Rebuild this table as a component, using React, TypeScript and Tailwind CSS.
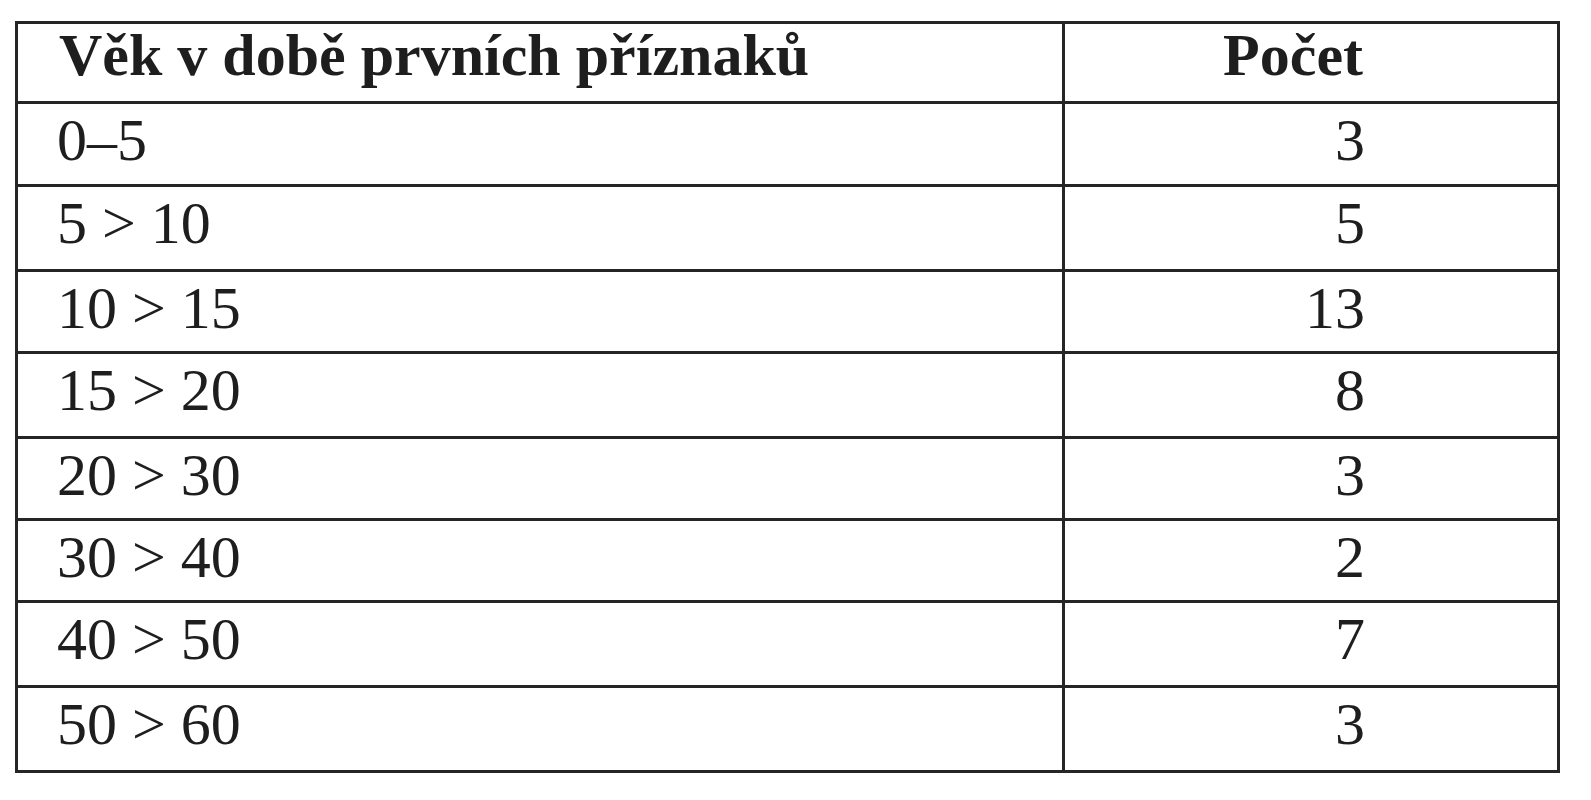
import React from 'react';

interface Row {
  range: string;
  count: string;
  height: string;
}

// row heights follow the scanned table, it is not perfectly even
const rows: Row[] = [
  { range: '0–5', count: '3', height: 'h-[83px]' },
  { range: '5 > 10', count: '5', height: 'h-[85px]' },
  { range: '10 > 15', count: '13', height: 'h-[82px]' },
  { range: '15 > 20', count: '8', height: 'h-[85px]' },
  { range: '20 > 30', count: '3', height: 'h-[82px]' },
  { range: '30 > 40', count: '2', height: 'h-[82px]' },
  { range: '40 > 50', count: '7', height: 'h-[85px]' },
  { range: '50 > 60', count: '3', height: 'h-[85px]' },
];

const App: React.FC = () => {
  return (
    <div className="min-h-screen w-full bg-white pt-[21px] pl-[15px] font-['Liberation_Serif','Times_New_Roman',serif] text-[60px] leading-[60px] text-[#1e1e1e]">
      <div className="w-[1545px] border-[3px] border-[#252525]">
        {/* Header */}
        <div className="flex h-[77px] font-bold">
          <div className="w-[1047px] shrink-0 border-r-[3px] border-[#252525] pl-[41px] pt-[1px]">
            Věk v době prvních příznaků
          </div>
          <div className="flex-1 pr-[194px] pt-[1px] text-right">Počet</div>
        </div>

        {/* Rows */}
        {rows.map((row) => (
          <div key={row.range} className={`flex border-t-[3px] border-[#252525] ${row.height}`}>
            <div className="w-[1047px] shrink-0 border-r-[3px] border-[#252525] pl-[39px] pt-[6px]">
              {row.range}
            </div>
            <div className="flex-1 pr-[192px] pt-[6px] text-right">{row.count}</div>
          </div>
        ))}
      </div>
    </div>
  );
};

export default App;
